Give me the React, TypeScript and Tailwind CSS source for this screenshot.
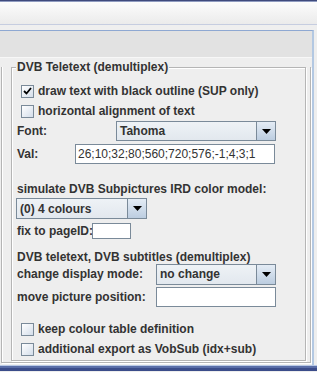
const Check = ({ checked }: { checked?: boolean }) => (
  <span className="relative flex h-[13px] w-[13px] shrink-0 items-center justify-center border border-[#7a8a99] bg-gradient-to-br from-white to-[#d4deea]">
    {checked && (
      <svg width="9" height="8" viewBox="0 0 9 8" className="block">
        <path d="M1 4 L3.5 6.5 L8 1" stroke="#000" strokeWidth="1.8" fill="none" />
      </svg>
    )}
  </span>
);

const CheckRow = ({ label, checked }: { label: string; checked?: boolean }) => (
  <div className="flex h-[20px] items-center gap-[4px] pl-[9px] whitespace-nowrap">
    <Check checked={checked} />
    <span>{label}</span>
  </div>
);

const Arrow = () => (
  <svg width="9" height="5" viewBox="0 0 9 5" className="block">
    <path d="M0 0 H9 L4.5 5 Z" fill="#000" />
  </svg>
);

const Combo = ({ value, className }: { value: string; className: string }) => (
  <div className={`flex shrink-0 border border-[#7a8a99] ${className}`}>
    <div className="flex flex-1 items-center bg-gradient-to-b from-[#eef2f6] to-[#e2e8ee] pl-[3px]">{value}</div>
    <div className="flex w-[19px] items-center justify-center border-l border-[#7a8a99] bg-gradient-to-b from-[#e4ecf5] to-[#bccde0]">
      <Arrow />
    </div>
  </div>
);

const Field = ({ value, className }: { value?: string; className: string }) => (
  <div className={`flex shrink-0 items-center border border-[#7a8a99] bg-white pl-[2px] font-normal ${className}`}>{value}</div>
);

export default function App() {
  return (
    <div className="flex h-[372px] w-[317px] flex-col overflow-hidden bg-[#eeeeee] text-[12px] font-bold leading-none whitespace-nowrap text-[#333333] [font-family:'Liberation_Sans',Arial,sans-serif]">
      <div className="h-px bg-[#3f4a7c]" />
      <div className="h-px bg-[#8f9bc0]" />
      <div className="h-[22px] bg-gradient-to-b from-[#fcfcfc] to-[#ebebeb]" />
      <div className="h-px bg-[#c6cde0]" />
      <div className="h-[5px] bg-[#efefef]" />

      <div className="flex h-[335px] w-[314px] flex-col border-r-2 border-t border-r-[#b3c8e2] border-t-[#8ea8d2]">
        <div className="h-[26px] bg-[#e2e2e2]" />
        <div className="h-px bg-[#f7f7f7]" />
        <div className="flex-1 pl-px pt-[9px]">
          <div className="w-[310px] border-b border-l border-r border-[#b5b5b5] pb-px pl-[9px] pr-[4px] shadow-[inset_1px_0_0_white,1px_1px_0_white]">
            <div className="relative flex flex-col border border-[#b5b5b5] pb-px shadow-[inset_1px_1px_0_white,1px_1px_0_white]">
              <span className="absolute left-[4px] top-[-7px] bg-[#eeeeee] px-px">DVB Teletext (demultiplex)</span>
              <div className="h-[13px]" />
              <CheckRow label="draw text with black outline (SUP only)" checked />
              <CheckRow label="horizontal alignment of text" />
              <div className="flex h-[20px] items-center pl-[5px]">
                <span className="w-[99px] shrink-0">Font:</span>
                <Combo value="Tahoma" className="h-[20px] w-[160px]" />
              </div>
              <div className="mt-[3px] flex h-[20px] items-center pl-[5px]">
                <span className="w-[58px] shrink-0">Val:</span>
                <Field value="26;10;32;80;560;720;576;-1;4;3;1" className="h-[20px] w-[200px]" />
              </div>
              <div className="mt-[17px] flex h-[16px] items-center pl-[5px]">simulate DVB Subpictures IRD color model:</div>
              <div className="mt-px pl-[4px]">
                <Combo value="(0) 4 colours" className="h-[21px] w-[131px]" />
              </div>
              <div className="mt-[3px] flex h-[18px] items-center pl-[5px]">
                <span className="w-[75px] shrink-0">fix to pageID:</span>
                <Field className="h-[16px] w-[39px]" />
              </div>
              <div className="mt-[10px] flex h-[14px] items-center pl-[5px]">DVB teletext, DVB subtitles (demultiplex)</div>
              <div className="flex h-[20px] items-center pl-[5px]">
                <span className="w-[139px] shrink-0">change display mode:</span>
                <Combo value="no change" className="h-[21px] w-[120px]" />
              </div>
              <div className="mt-[3px] flex h-[20px] items-center pl-[5px]">
                <span className="w-[139px] shrink-0">move picture position:</span>
                <Field className="h-[20px] w-[120px]" />
              </div>
              <div className="mt-[12px]" />
              <CheckRow label="keep colour table definition" />
              <CheckRow label="additional export as VobSub (idx+sub)" />
            </div>
          </div>
        </div>
      </div>
      <div className="h-px bg-[#b9c9e6]" />
      <div className="h-[2px] bg-[#5a6ea8]" />
      <div className="h-[3px] bg-[#3b4c8a]" />
    </div>
  );
}
